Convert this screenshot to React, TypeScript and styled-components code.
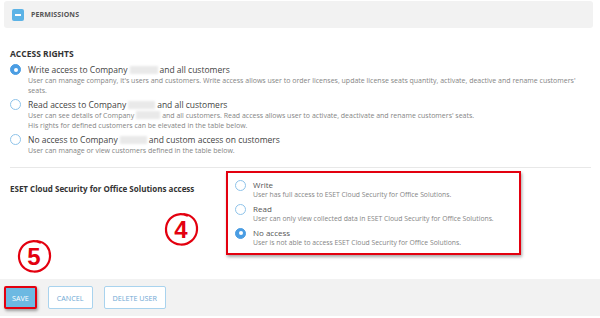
import styled, { createGlobalStyle } from 'styled-components'

const GlobalStyle = createGlobalStyle`
  html, body {
    margin: 0;
    padding: 0;
    background: #ffffff;
  }
  body {
    font-family: "Open Sans", "Noto Sans", sans-serif;
  }
`

const Page = styled.div`
  position: relative;
  width: 600px;
  height: 318px;
  overflow: hidden;
  display: flex;
  flex-direction: column;
  background: #ffffff;
`

const HeaderBar = styled.div`
  margin: 1px 7px 0 4px;
  height: 27px;
  background: #f2f2f2;
  border-radius: 3px;
  display: flex;
  align-items: center;
  padding-left: 8px;
  gap: 7px;
`

const MinusIcon = styled.div`
  width: 12px;
  height: 12px;
  border-radius: 2px;
  background: #5cb3e6;
  display: flex;
  align-items: center;
  justify-content: center;
  &::after {
    content: '';
    width: 6px;
    height: 2px;
    background: #ffffff;
  }
`

const HeaderTitle = styled.span`
  font-size: 7px;
  font-weight: 700;
  color: #555;
  letter-spacing: 0.1px;
`

const Content = styled.div`
  padding: 0 9px 0 10px;
`

const SectionTitle = styled.div`
  margin-top: 20px;
  font-size: 8.5px;
  font-weight: 700;
  color: #333;
  line-height: 12px;
`

const OptionList = styled.div`
  margin-top: 3px;
  display: flex;
  flex-direction: column;
  gap: 3px;
`

const Option = styled.div`
  display: grid;
  grid-template-columns: 12px 1fr;
  column-gap: 6px;
  align-items: start;
`

const Radio = styled.span<{ $checked?: boolean }>`
  margin-top: 1px;
  width: 11px;
  height: 11px;
  box-sizing: border-box;
  border-radius: 50%;
  border: 1px solid ${p => (p.$checked ? '#4a9de3' : '#8ec3ea')};
  background: ${p => (p.$checked ? '#4a9de3' : '#ffffff')};
  display: flex;
  align-items: center;
  justify-content: center;
  &::after {
    content: '';
    display: ${p => (p.$checked ? 'block' : 'none')};
    width: 4px;
    height: 4px;
    border-radius: 50%;
    background: #ffffff;
  }
`

const OptionText = styled.div``

const Label = styled.div`
  font-size: 8.5px;
  line-height: 13px;
  color: #444;
`

const Desc = styled.div`
  font-size: 7px;
  line-height: 9.5px;
  color: #858585;
`

const Hidden = styled.span<{ $w: number }>`
  display: inline-block;
  width: ${p => p.$w}px;
  height: 8px;
  vertical-align: -1px;
  margin: 0 2px;
  background: #e9e9e9;
  filter: blur(1.2px);
`

const Divider = styled.div`
  margin: 11px 0 0 0;
  height: 1px;
  background: #e8e8e8;
`

const CloudRow = styled.div`
  display: flex;
  margin-top: 3px;
`

const CloudLabel = styled.div`
  width: 216px;
  padding-top: 12px;
  font-size: 8px;
  font-weight: 700;
  color: #333;
  line-height: 11px;
`

const CloudBox = styled.div`
  width: 295px;
  box-sizing: border-box;
  border: 2px solid #e3000f;
  box-shadow: 1px 2px 3px rgba(0, 0, 0, 0.35);
  padding: 6px 8px 6px 7px;
  display: flex;
  flex-direction: column;
  gap: 4px;
`

const SmallLabel = styled.div`
  font-size: 8px;
  line-height: 11px;
  color: #555;
  font-weight: 400;
`

const SmallDesc = styled.div`
  font-size: 6.8px;
  line-height: 9px;
  color: #858585;
`

const Footer = styled.div`
  margin-top: auto;
  height: 37px;
  margin-bottom: 2px;
  background: #f2f2f2;
  display: flex;
  align-items: center;
  padding-left: 4px;
  gap: 11px;
`

const Button = styled.div<{ $primary?: boolean }>`
  height: 23px;
  box-sizing: border-box;
  padding: 0 ${p => (p.$primary ? '6px' : '8px')};
  display: flex;
  align-items: center;
  font-size: 7.2px;
  color: ${p => (p.$primary ? '#ffffff' : '#6fa9d4')};
  background: ${p => (p.$primary ? '#6cb9e2' : '#ffffff')};
  border: ${p => (p.$primary ? '2px solid #e3000f' : '1px solid #a9d3ee')};
  border-radius: 2px;
  box-shadow: ${p => (p.$primary ? '1px 2px 3px rgba(0,0,0,0.35)' : 'none')};
`

const Marker = styled.div<{ $x: number; $y: number }>`
  position: absolute;
  left: ${p => p.$x}px;
  top: ${p => p.$y}px;
  width: 38px;
  height: 38px;
`

const MarkerNum = styled.span`
  position: absolute;
  inset: 0;
  display: flex;
  align-items: center;
  justify-content: center;
  font-family: "Liberation Sans", Arial, sans-serif;
  font-weight: 700;
  font-size: 24px;
  color: #e3000f;
  padding-top: 2px;
`

function CircleMark({ x, y, n }: { x: number; y: number; n: string }) {
  return (
    <Marker $x={x} $y={y}>
      <svg width="38" height="38" viewBox="0 0 38 38">
        <path
          d="M22 4 C 30.5 5 35.5 11.5 35 20 C 34.5 28.5 27 35 18.5 34.5 C 9.5 34 3.5 27 4 18.5 C 4.5 11 10 5 17 4.3 C 19.5 4 22 4.3 25 5.6"
          fill="none"
          stroke="#e3000f"
          strokeWidth="2.2"
          strokeLinecap="round"
        />
      </svg>
      <MarkerNum>{n}</MarkerNum>
    </Marker>
  )
}

export default function App() {
  return (
    <Page>
      <GlobalStyle />
      <HeaderBar>
        <MinusIcon />
        <HeaderTitle>PERMISSIONS</HeaderTitle>
      </HeaderBar>
      <Content>
        <SectionTitle>ACCESS RIGHTS</SectionTitle>
        <OptionList>
          <Option>
            <Radio $checked />
            <OptionText>
              <Label>
                Write access to Company<Hidden $w={28} />and all customers
              </Label>
              <Desc>
                User can manage company, it's users and customers. Write access allows user to order licenses, update license seats quantity, activate, deactive and rename customers'
                <br />
                seats.
              </Desc>
            </OptionText>
          </Option>
          <Option>
            <Radio />
            <OptionText>
              <Label>
                Read access to Company<Hidden $w={27} />and all customers
              </Label>
              <Desc>
                User can see details of Company<Hidden $w={24} />and all customers. Read access allows user to activate, deactivate and rename customers' seats.
                <br />
                His rights for defined customers can be elevated in the table below.
              </Desc>
            </OptionText>
          </Option>
          <Option>
            <Radio />
            <OptionText>
              <Label>
                No access to Company<Hidden $w={27} />and custom access on customers
              </Label>
              <Desc>User can manage or view customers defined in the table below.</Desc>
            </OptionText>
          </Option>
        </OptionList>
        <Divider />
        <CloudRow>
          <CloudLabel>ESET Cloud Security for Office Solutions access</CloudLabel>
          <CloudBox>
            <Option>
              <Radio />
              <OptionText>
                <SmallLabel>Write</SmallLabel>
                <SmallDesc>User has full access to ESET Cloud Security for Office Solutions.</SmallDesc>
              </OptionText>
            </Option>
            <Option>
              <Radio />
              <OptionText>
                <SmallLabel>Read</SmallLabel>
                <SmallDesc>User can only view collected data in ESET Cloud Security for Office Solutions.</SmallDesc>
              </OptionText>
            </Option>
            <Option>
              <Radio $checked />
              <OptionText>
                <SmallLabel>No access</SmallLabel>
                <SmallDesc>User is not able to access ESET Cloud Security for Office Solutions.</SmallDesc>
              </OptionText>
            </Option>
          </CloudBox>
        </CloudRow>
      </Content>
      <Footer>
        <Button $primary>SAVE</Button>
        <Button>CANCEL</Button>
        <Button>DELETE USER</Button>
      </Footer>
      <CircleMark x={162} y={210} n="4" />
      <CircleMark x={15} y={237} n="5" />
    </Page>
  )
}
